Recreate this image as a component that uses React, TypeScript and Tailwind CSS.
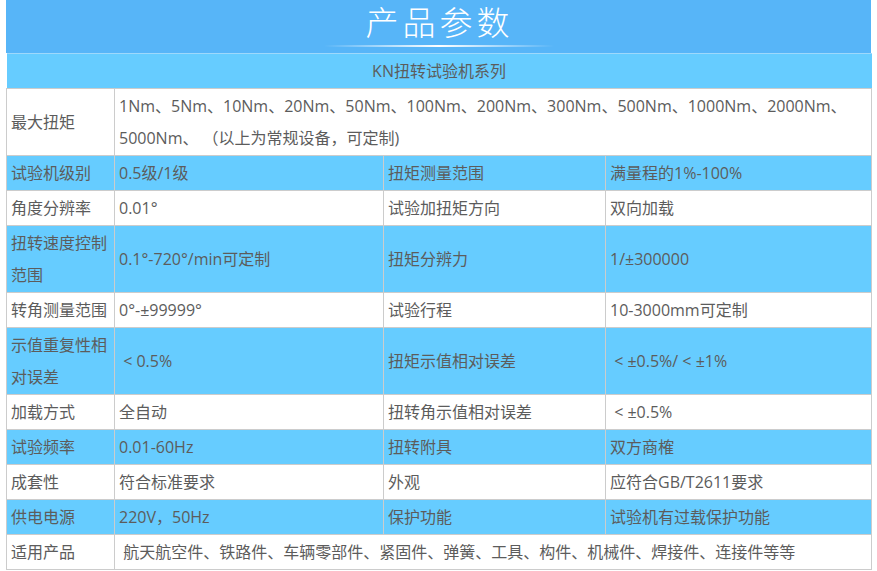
import React from 'react';

type Cell = { text: string; span?: number };
type Row = { cells: Cell[]; blue: boolean; tall?: boolean };

const rows: Row[] = [
  {
    blue: false,
    tall: true,
    cells: [
      { text: '最大扭矩' },
      {
        text: '1Nm、5Nm、10Nm、20Nm、50Nm、100Nm、200Nm、300Nm、500Nm、1000Nm、2000Nm、5000Nm、 （以上为常规设备，可定制)',
        span: 3,
      },
    ],
  },
  {
    blue: true,
    cells: [{ text: '试验机级别' }, { text: '0.5级/1级' }, { text: '扭矩测量范围' }, { text: '满量程的1%-100%' }],
  },
  {
    blue: false,
    cells: [{ text: '角度分辨率' }, { text: '0.01°' }, { text: '试验加扭矩方向' }, { text: '双向加载' }],
  },
  {
    blue: true,
    tall: true,
    cells: [{ text: '扭转速度控制范围' }, { text: '0.1°-720°/min可定制' }, { text: '扭矩分辨力' }, { text: '1/±300000' }],
  },
  {
    blue: false,
    cells: [{ text: '转角测量范围' }, { text: '0°-±99999°' }, { text: '试验行程' }, { text: '10-3000mm可定制' }],
  },
  {
    blue: true,
    tall: true,
    cells: [
      { text: '示值重复性相对误差' },
      { text: '\u00a0<\u00a00.5%' },
      { text: '扭矩示值相对误差' },
      { text: '\u00a0<\u00a0±0.5%/\u00a0<\u00a0±1%' },
    ],
  },
  {
    blue: false,
    cells: [{ text: '加载方式' }, { text: '全自动' }, { text: '扭转角示值相对误差' }, { text: '\u00a0<\u00a0±0.5%' }],
  },
  {
    blue: true,
    cells: [{ text: '试验频率' }, { text: '0.01-60Hz' }, { text: '扭转附具' }, { text: '双方商榷' }],
  },
  {
    blue: false,
    cells: [{ text: '成套性' }, { text: '符合标准要求' }, { text: '外观' }, { text: '应符合GB/T2611要求' }],
  },
  {
    blue: true,
    cells: [{ text: '供电电源' }, { text: '220V，50Hz' }, { text: '保护功能' }, { text: '试验机有过载保护功能' }],
  },
  {
    blue: false,
    cells: [
      { text: '适用产品' },
      { text: '\u00a0航天航空件、铁路件、车辆零部件、紧固件、弹簧、工具、构件、机械件、焊接件、连接件等等', span: 3 },
    ],
  },
];

export default function App() {
  return (
    <div
      className="min-h-[571px] w-[877px] bg-white"
      style={{ fontFamily: '"Open Sans", "Noto Sans CJK SC", sans-serif' }}
    >
      <div className="ml-[6px] w-[865px]">
        {/* Title bar */}
        <div className="flex h-[53px] flex-col items-center bg-[#57b5f8]">
          <div className="mt-[3px] pl-[2px] text-[33px] font-light leading-[40px] tracking-[4px] text-white">
            产品参数
          </div>
          <div className="mt-[2px] h-[2px] w-[230px] bg-gradient-to-r from-transparent via-white to-transparent" />
        </div>

        <table className="w-[865px] table-fixed border-collapse text-[16px] text-[#5c5c5c]">
          <colgroup>
            <col className="w-[108px]" />
            <col className="w-[269px]" />
            <col className="w-[222px]" />
            <col className="w-[266px]" />
          </colgroup>
          <tbody>
            <tr className="bg-[#66ccff]">
              <td
                colSpan={4}
                className="h-[35px] border-t border-t-[#9ed8fb] border-b border-b-[#cccccc] text-center text-[16px] leading-[32px]"
              >
                KN扭转试验机系列
              </td>
            </tr>
            {rows.map((row, i) => (
              <tr key={i} className={row.blue ? 'bg-[#66ccff]' : 'bg-white'}>
                {row.cells.map((cell, j) => (
                  <td
                    key={j}
                    colSpan={cell.span}
                    className={`border border-[#cccccc] px-[4px] py-[1px] align-middle leading-[32px] ${
                      row.tall ? 'h-[67px]' : 'h-[35px]'
                    }`}
                  >
                    {cell.text}
                  </td>
                ))}
              </tr>
            ))}
          </tbody>
        </table>
      </div>
    </div>
  );
}
